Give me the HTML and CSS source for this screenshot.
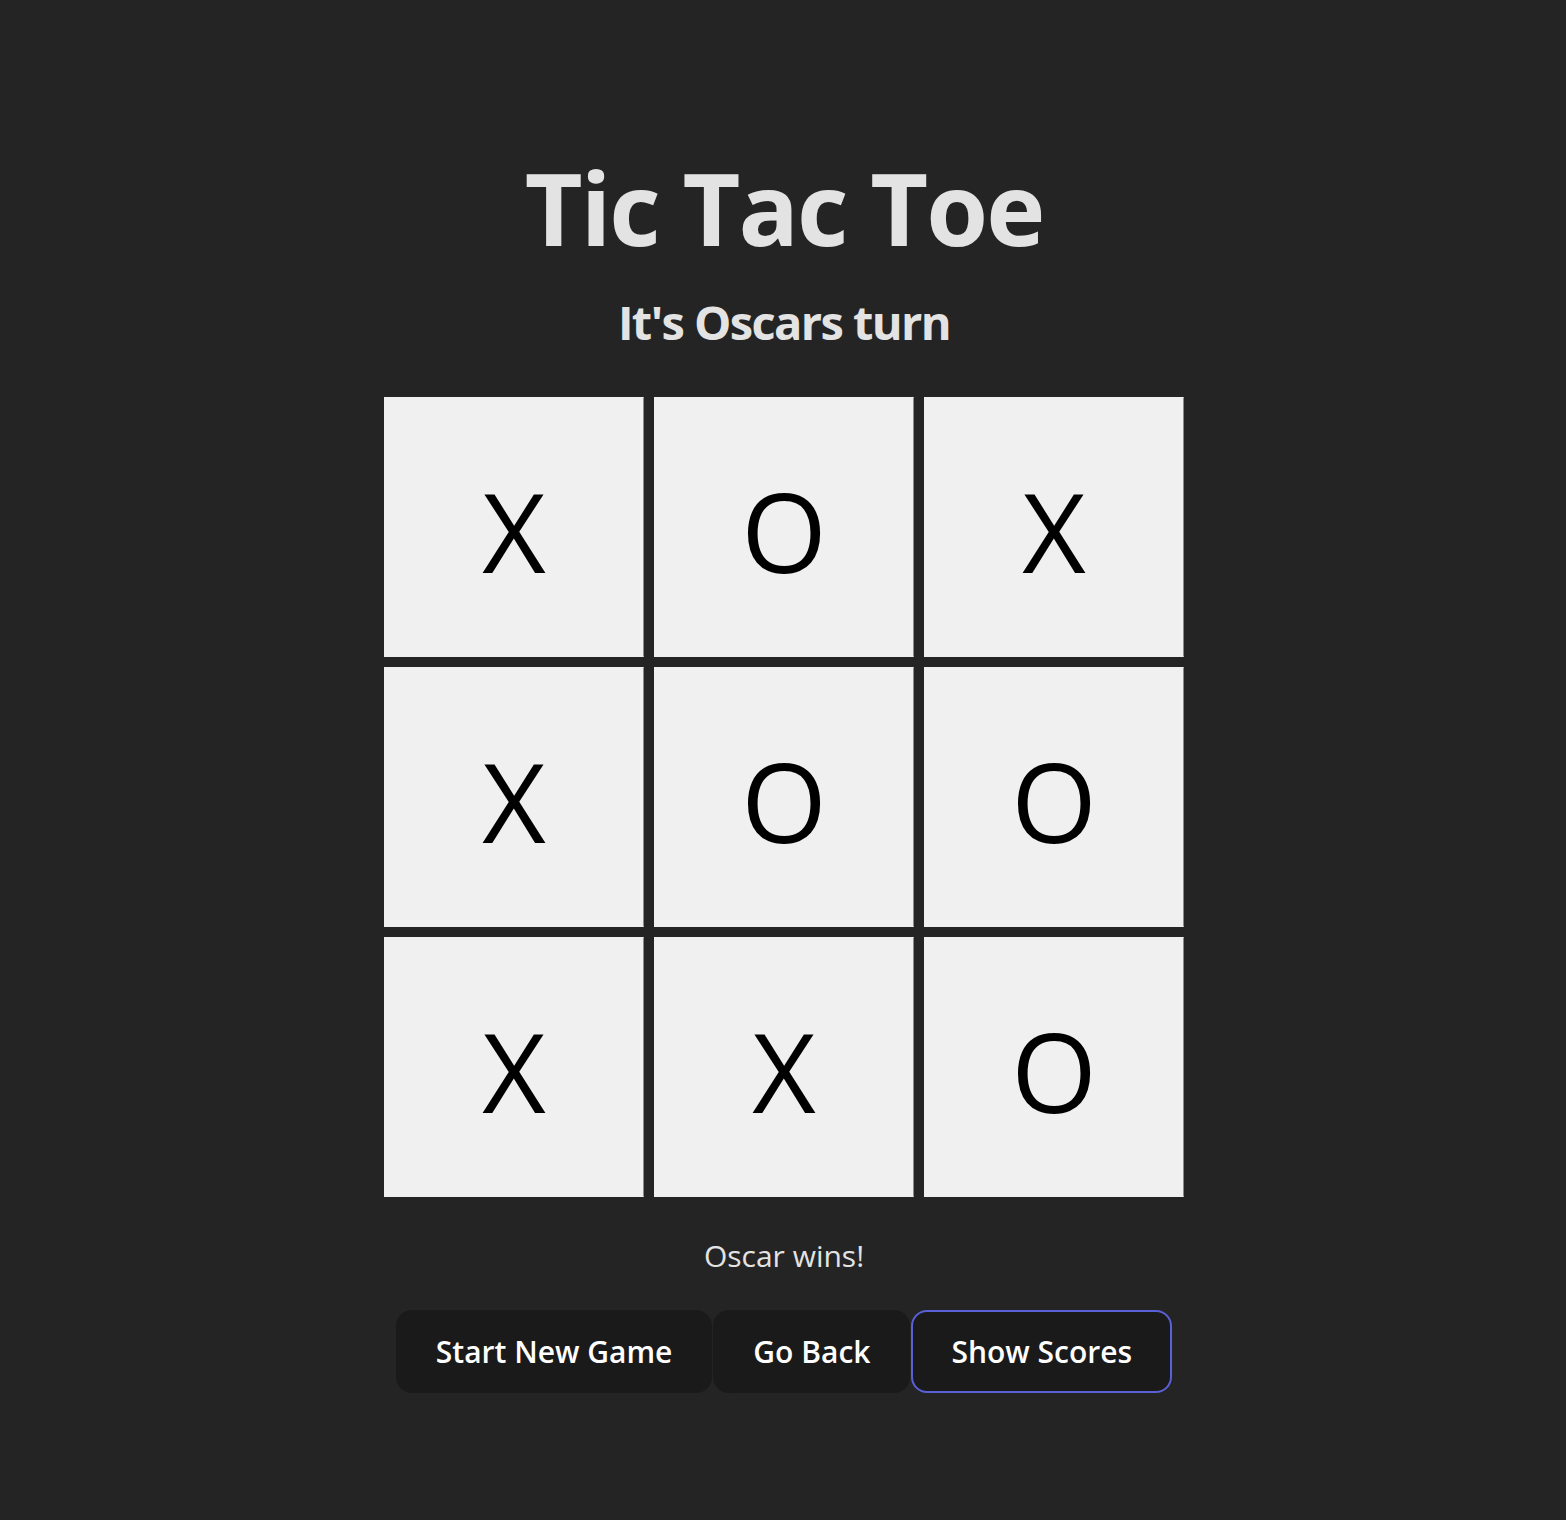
FILE: index.html
```html
<!DOCTYPE html>
<html lang="en">
<head>
<meta charset="UTF-8">
<title>Tic Tac Toe</title>
<link rel="stylesheet" href="styles.css">
</head>
<body>
<div class="app">
  <h1 class="title">Tic Tac Toe</h1>
  <h2 class="turn">It's Oscars turn</h2>
  <div class="board">
    <div class="cell">X</div>
    <div class="cell">O</div>
    <div class="cell">X</div>
    <div class="cell">X</div>
    <div class="cell">O</div>
    <div class="cell">O</div>
    <div class="cell">X</div>
    <div class="cell">X</div>
    <div class="cell">O</div>
  </div>
  <p class="result">Oscar wins!</p>
  <div class="actions">
    <button class="btn">Start New Game</button>
    <button class="btn">Go Back</button>
    <button class="btn btn-focus">Show Scores</button>
  </div>
</div>
</body>
</html>
```
FILE: styles.css
```css
html, body {
  margin: 0;
  padding: 0;
}
body {
  background: #242424;
  color: rgba(255, 255, 255, 0.87);
  font-family: "Open Sans", "Noto Sans", sans-serif;
  min-height: 1520px;
}
.app {
  display: flex;
  flex-direction: column;
  align-items: center;
  padding-top: 152px;
  padding-left: 2px;
}
.title {
  margin: 0;
  font-size: 100px;
  font-weight: 700;
  line-height: 1.1;
  letter-spacing: -2px;
  color: #e3e3e3;
}
.turn {
  margin: 32px 0 0;
  font-size: 47px;
  font-weight: 700;
  line-height: 1.2;
  letter-spacing: -1.6px;
  color: #e3e3e3;
}
.board {
  margin-top: 47px;
  display: grid;
  grid-template-columns: repeat(3, 260px);
  grid-template-rows: repeat(3, 260px);
  column-gap: 10px;
  row-gap: 10px;
}
.cell {
  background: #f0f0f0;
  border: 1px solid #f0f0f0;
  border-right-color: #8a8a8a;
  box-sizing: border-box;
  display: flex;
  align-items: center;
  justify-content: center;
  padding-top: 6px;
  color: #000;
  font-size: 110px;
  font-weight: 400;
}
.result {
  margin: 36px 0 0;
  font-size: 30px;
  line-height: 1.5;
  color: #e3e3e3;
}
.actions {
  margin-top: 32px;
  display: flex;
  gap: 1px;
}
.btn {
  font-family: inherit;
  font-size: 30px;
  font-weight: 600;
  color: #fff;
  background: #1a1a1a;
  border: 2px solid transparent;
  border-radius: 16px;
  padding: 0 38px;
  height: 83px;
}
.btn-focus {
  border-color: #5a60d6;
}
```
